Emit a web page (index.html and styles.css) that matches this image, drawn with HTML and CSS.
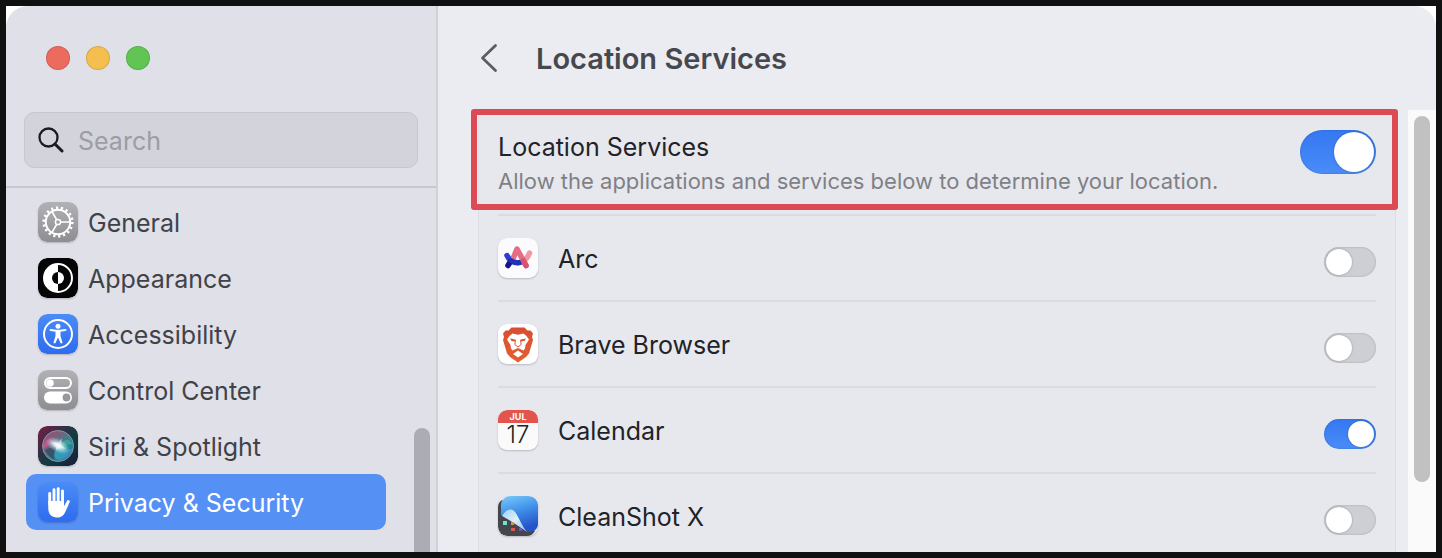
FILE: index.html
```html
<!DOCTYPE html>
<html lang="en">
<head>
    <meta charset="UTF-8">
    <meta name="viewport" content="width=device-width, initial-scale=1.0">
    <title>Location Services</title>
    <link rel="stylesheet" href="styles.css">
</head>
<body>

    <div class="frame">
        <div class="window">

            <aside class="sidebar">
                <div class="window-buttons">
                    <button type="button" class="dot dot-close" aria-label="Close"></button>
                    <button type="button" class="dot dot-minimize" aria-label="Minimize"></button>
                    <button type="button" class="dot dot-zoom" aria-label="Zoom"></button>
                </div>

                <label class="search">
                    <svg class="search-icon" viewBox="0 0 26 26" aria-hidden="true">
                        <circle cx="10.500" cy="10.500" r="9" fill="none" stroke="#1b1b20" stroke-width="2.300"/>
                        <path d="M17 17 L24 24" stroke="#1b1b20" stroke-width="3" stroke-linecap="round"/>
                    </svg>
                    <input type="search" placeholder="Search" aria-label="Search">
                </label>

                <div class="sidebar-body">
                    <nav class="nav">
                        <a href="#general" class="nav-item">
                            <svg class="icon" viewBox="0 0 40 40" aria-hidden="true">
                                <defs>
                                    <linearGradient id="gray" x1="0" y1="0" x2="0" y2="1">
                                        <stop offset="0" stop-color="#b2b2b6"/>
                                        <stop offset="1" stop-color="#8e8e92"/>
                                    </linearGradient>
                                </defs>
                                <rect width="40" height="40" rx="9" fill="url(#gray)"/>
                                <circle cx="20" cy="20" r="14.300" fill="none" stroke="#fff" stroke-width="2.600" stroke-dasharray="2.200 2.792"/>
                                <circle cx="20" cy="20" r="12.200" fill="none" stroke="#fff" stroke-width="2"/>
                                <circle cx="20" cy="20" r="2.600" fill="none" stroke="#fff" stroke-width="1.500"/>
                                <path d="M23 20 H32 M18.500 17.400 L14 9.600 M18.500 22.600 L14 30.400" stroke="#fff" stroke-width="1.700"/>
                            </svg>
                            <span>General</span>
                        </a>
                        <a href="#appearance" class="nav-item">
                            <svg class="icon" viewBox="0 0 40 40" aria-hidden="true">
                                <rect width="40" height="40" rx="9" fill="#050505"/>
                                <circle cx="20" cy="20" r="14" fill="none" stroke="#fff" stroke-width="2"/>
                                <path d="M20 6 A14 14 0 0 0 20 34 Z" fill="#fff"/>
                                <path d="M20 14 A6 6 0 0 0 20 26 Z" fill="#050505"/>
                                <path d="M20 14 A6 6 0 0 1 20 26 Z" fill="#fff"/>
                            </svg>
                            <span>Appearance</span>
                        </a>
                        <a href="#accessibility" class="nav-item">
                            <svg class="icon" viewBox="0 0 40 40" aria-hidden="true">
                                <defs>
                                    <linearGradient id="blue" x1="0" y1="0" x2="0" y2="1">
                                        <stop offset="0" stop-color="#4a8cf7"/>
                                        <stop offset="1" stop-color="#2f6bf0"/>
                                    </linearGradient>
                                </defs>
                                <rect width="40" height="40" rx="9" fill="url(#blue)"/>
                                <circle cx="20" cy="20" r="14" fill="none" stroke="#fff" stroke-width="2"/>
                                <circle cx="20" cy="12.300" r="2.500" fill="#fff"/>
                                <path d="M12.500 16 L18 16.700 H22 L27.500 16" fill="none" stroke="#fff" stroke-width="2" stroke-linecap="round" stroke-linejoin="round"/>
                                <path d="M17.500 16 H22.500 V22 L24.600 29 L22.800 29.500 L20 23.500 L17.200 29.500 L15.400 29 L17.500 22 Z" fill="#fff"/>
                            </svg>
                            <span>Accessibility</span>
                        </a>
                        <a href="#control-center" class="nav-item">
                            <svg class="icon" viewBox="0 0 40 40" aria-hidden="true">
                                <rect width="40" height="40" rx="9" fill="url(#gray)"/>
                                <rect x="7" y="8" width="26" height="10" rx="5" fill="none" stroke="#fff" stroke-width="2"/>
                                <circle cx="12" cy="13" r="3.800" fill="#fff"/>
                                <rect x="6" y="21.500" width="28" height="12" rx="6" fill="#fff"/>
                                <circle cx="28.500" cy="27.500" r="3.900" fill="#98989c"/>
                            </svg>
                            <span>Control Center</span>
                        </a>
                        <a href="#siri" class="nav-item">
                            <svg class="icon" viewBox="0 0 40 40" aria-hidden="true">
                                <defs>
                                    <linearGradient id="siri-back" x1="0" y1="0" x2="1" y2="1">
                                        <stop offset="0" stop-color="#7c1a46"/>
                                        <stop offset="0.400" stop-color="#273344"/>
                                        <stop offset="0.600" stop-color="#123c40"/>
                                        <stop offset="1" stop-color="#191b39"/>
                                    </linearGradient>
                                    <linearGradient id="siri-orb" x1="0" y1="0" x2="1" y2="1">
                                        <stop offset="0" stop-color="#b84078"/>
                                        <stop offset="0.350" stop-color="#71647e"/>
                                        <stop offset="0.650" stop-color="#268c9a"/>
                                        <stop offset="1" stop-color="#315eb0"/>
                                    </linearGradient>
                                    <radialGradient id="siri-glow">
                                        <stop offset="0" stop-color="#fff"/>
                                        <stop offset="0.300" stop-color="#e8faff" stop-opacity="0.850"/>
                                        <stop offset="1" stop-color="#9be8ee" stop-opacity="0"/>
                                    </radialGradient>
                                </defs>
                                <rect width="40" height="40" rx="9" fill="url(#siri-back)"/>
                                <circle cx="20" cy="20" r="15.500" fill="url(#siri-orb)" stroke="#8e98a0" stroke-width="0.900"/>
                                <path d="M5 19 C10 9 15 14 21 20 C14 17 10 20 5 23 Z" fill="#ef579b" opacity="0.500"/>
                                <path d="M21 20 C28 10 31 14 35 18 C30 18 26 19 21 20 Z" fill="#43bfa0" opacity="0.500"/>
                                <path d="M20 20 C16 23 14 31 21 34 C30 33 33 27 35 22 C29 26 24 23 20 20 Z" fill="#46b7e0" opacity="0.400"/>
                                <path d="M7 24 C13 21 17 21 21 20 C16 25 15 29 17 34 C11 31 9 28 7 24 Z" fill="#30455e" opacity="0.700"/>
                                <ellipse cx="20" cy="19.500" rx="13" ry="7" transform="rotate(28 20 19.500)" fill="url(#siri-glow)"/>
                                <path d="M12 16 L20 17 L24 12 L23 19 L28 23 L22 22 L18 24 L18 20 Z" fill="#fff" opacity="0.450"/>
                            </svg>
                            <span>Siri &amp; Spotlight</span>
                        </a>
                        <a href="#privacy" class="nav-item nav-item-active" aria-current="page">
                            <svg class="icon" viewBox="0 0 40 40" aria-hidden="true">
                                <rect width="40" height="40" rx="9" fill="url(#blue)"/>
                                <g fill="none" stroke="#fff" stroke-width="2.900" stroke-linecap="round" stroke-linejoin="round">
                                    <path d="M11.700 22 V11.500"/>
                                    <path d="M16 20 V7.700"/>
                                    <path d="M20.200 20 V6.700"/>
                                    <path d="M24.500 22 V9"/>
                                    <path d="M26 28 L30.300 19.500"/>
                                </g>
                                <path d="M10.250 19 H25.950 V24.500 L28 21 L30.600 22.500 L27.500 29.500 C25.500 34 23 35.500 19 35.500 C13.500 35.500 10.250 32 10.250 26 Z" fill="#fff"/>
                            </svg>
                            <span>Privacy &amp; Security</span>
                        </a>
                    </nav>
                    <div class="sidebar-thumb"></div>
                </div>
            </aside>

            <main class="content">
                <header class="content-header">
                    <button type="button" class="back" aria-label="Back">
                        <svg viewBox="0 0 18 30" aria-hidden="true">
                            <path d="M15.500 2.500 L2.500 15 L15.500 27.500" fill="none" stroke="#5c5d63" stroke-width="2.800" stroke-linecap="round" stroke-linejoin="round"/>
                        </svg>
                    </button>
                    <h1>Location Services</h1>
                </header>

                <div class="content-body">
                    <section class="card">
                        <div class="row row-main">
                            <label for="location" class="row-text">
                                <span class="row-title">Location Services</span>
                                <span class="row-note">Allow the applications and services below to determine your location.</span>
                            </label>
                            <input type="checkbox" id="location" class="toggle toggle-large" checked>
                        </div>
                        <div class="row">
                            <svg class="icon" viewBox="0 0 40 40" aria-hidden="true">
                                <rect width="40" height="40" rx="9" fill="#fbfafc"/>
                                <g fill="none" stroke-linecap="round" stroke-linejoin="round">
                                    <path d="M31.500 15 C30 19 28 21.500 25 23.500" stroke="#f09aa0" stroke-width="5.500"/>
                                    <path d="M9 17.500 C12 24.500 19 26 25 23.500" stroke="#2a3fd6" stroke-width="5.500"/>
                                    <path d="M10 27.500 L12.500 23.500" stroke="#14138c" stroke-width="5.500"/>
                                    <path d="M15.500 19.500 L19 11 L28 27.500" stroke="#e56c85" stroke-width="5.500"/>
                                    <path d="M13 22.500 C16 24.500 19 25 21 24.500" stroke="#2230b8" stroke-width="5"/>
                                    <path d="M25.500 23 L28 27.500" stroke="#d95274" stroke-width="5.500"/>
                                </g>
                            </svg>
                            <label for="arc" class="row-title">Arc</label>
                            <input type="checkbox" id="arc" class="toggle">
                        </div>
                        <div class="row">
                            <svg class="icon" viewBox="0 0 40 40" aria-hidden="true">
                                <defs>
                                    <linearGradient id="brave" x1="0" y1="0" x2="0" y2="1">
                                        <stop offset="0" stop-color="#d94d32"/>
                                        <stop offset="1" stop-color="#e5602f"/>
                                    </linearGradient>
                                </defs>
                                <rect width="40" height="40" rx="9" fill="#fff"/>
                                <path d="M13.500 3.500 H26.500 L29.500 6.500 L32.500 6.500 L35 9.500 L34 13 L35 16 L31 29.500 L28 33 L20 38.500 L12 33 L9 29.500 L5 16 L6 13 L5 9.500 L7.500 6.500 L10.500 6.500 Z" fill="url(#brave)"/>
                                <path d="M14.500 9.500 L20 10.800 L25.500 9.500 L28.500 12 L31 15.500 L27.500 21 L27 24.500 L25.500 26.500 L20 24 L14.500 26.500 L13 24.500 L12.500 21 L9 15.500 L11.500 12 Z" fill="#fff"/>
                                <path d="M12 14.500 L17.500 15.500 L16.500 17.500 L13.500 17 Z M28 14.500 L22.500 15.500 L23.500 17.500 L26.500 17 Z" fill="#dd5433"/>
                                <path d="M17.500 16 L16.800 20.500 L20 23 L23.200 20.500 L22.500 16" fill="none" stroke="#dd5433" stroke-width="1"/>
                                <path d="M15 30 L20 26.500 L25 30 L20 33.500 Z" fill="#fff"/>
                            </svg>
                            <label for="brave-browser" class="row-title">Brave Browser</label>
                            <input type="checkbox" id="brave-browser" class="toggle">
                        </div>
                        <div class="row">
                            <svg class="icon" viewBox="0 0 40 40" aria-hidden="true">
                                <rect width="40" height="40" rx="9" fill="#fafafa"/>
                                <path d="M0 13 V9 A9 9 0 0 1 9 0 H31 A9 9 0 0 1 40 9 V13 Z" fill="#e2544c"/>
                                <text x="20" y="10" class="calendar-month">JUL</text>
                                <text x="20" y="33" class="calendar-day">17</text>
                            </svg>
                            <label for="calendar" class="row-title">Calendar</label>
                            <input type="checkbox" id="calendar" class="toggle" checked>
                        </div>
                        <div class="row">
                            <svg class="icon" viewBox="0 0 40 40" aria-hidden="true">
                                <defs>
                                    <linearGradient id="clean" x1="0" y1="0" x2="0.300" y2="1">
                                        <stop offset="0" stop-color="#7accf9"/>
                                        <stop offset="0.500" stop-color="#4090ea"/>
                                        <stop offset="1" stop-color="#2553c8"/>
                                    </linearGradient>
                                    <linearGradient id="curl" x1="0" y1="0" x2="1" y2="1">
                                        <stop offset="0" stop-color="#9fd2f4"/>
                                        <stop offset="0.500" stop-color="#dceffa"/>
                                        <stop offset="1" stop-color="#8dbcf0"/>
                                    </linearGradient>
                                </defs>
                                <path d="M4 4 C1 6 0 8 0 11 V31 A9 9 0 0 0 9 40 H29 C33 40 35 38 37 35 Z" fill="#44464e"/>
                                <path d="M3 19 V9 A9 9 0 0 1 12 0 H31 A9 9 0 0 1 40 9 V28 C40 33 36 36 30 36 L16 24 Z" fill="url(#clean)"/>
                                <path d="M4 20 C7 15.500 10 13.500 13 13.500 C19 14 21 26 29 36 C20 30 12 24 4 20 Z" fill="url(#curl)"/>
                                <rect x="5" y="25" width="4" height="4" fill="#76dfc8"/>
                                <rect x="13" y="26" width="3" height="3" fill="#dc923c"/>
                                <rect x="13" y="32" width="4" height="3" fill="#dc5951"/>
                                <rect x="21" y="32" width="3" height="3" fill="#7650c0"/>
                            </svg>
                            <label for="cleanshot" class="row-title">CleanShot X</label>
                            <input type="checkbox" id="cleanshot" class="toggle">
                        </div>
                    </section>
                    <div class="scroll-track">
                        <div class="scroll-thumb"></div>
                    </div>
                </div>
            </main>

        </div>
    </div>

</body>
</html>
```
FILE: styles.css
```css
* {
    box-sizing: border-box;
}

body {
    font-family: Inter, "Liberation Sans", sans-serif;
    font-size: 25px;
    color: #222328;
    background-color: #101011;
    margin: 0;
    padding: 6px;
    height: 100vh;
}

/* White backing that shows at the rounded corners */
.frame {
    height: 100%;
    background-color: #ffffff;
}

.window {
    display: flex;
    height: 100%;
    border-radius: 22px 22px 0 0;
    overflow: hidden;
}

/* Sidebar */
.sidebar {
    display: flex;
    flex-direction: column;
    flex: none;
    width: 432px;
    background-color: #dfe0e8;
    border-right: 2px solid #d0d1d8;
}

.window-buttons {
    display: flex;
    gap: 16px;
    padding: 40px 40px 42px;
}

.dot {
    width: 24px;
    height: 24px;
    padding: 0;
    border: 1px solid rgba(0, 0, 0, 0.12);
    border-radius: 50%;
}

.dot-close {
    background-color: #ed6a5e;
}

.dot-minimize {
    background-color: #f5bf4f;
}

.dot-zoom {
    background-color: #61c554;
}

.search {
    display: flex;
    align-items: center;
    gap: 14px;
    height: 56px;
    margin: 0 18px;
    padding: 0 13px;
    background-color: #d2d3db;
    border: 1px solid #c6c7cf;
    border-radius: 10px;
}

.search-icon {
    flex: none;
    width: 26px;
    height: 26px;
}

.search input {
    flex: 1;
    min-width: 0;
    padding: 2px 0 0;
    border: none;
    outline: none;
    background: none;
    font: inherit;
}

.search input::placeholder {
    color: #9c9da5;
}

.sidebar-body {
    display: flex;
    flex: 1;
    min-height: 0;
    margin-top: 18px;
    border-top: 2px solid #c6c7cf;
}

.nav {
    flex: 1;
    padding: 6px 28px 0 20px;
}

.nav-item {
    display: flex;
    align-items: center;
    gap: 10px;
    height: 56px;
    padding: 0 12px;
    border-radius: 10px;
    color: #414248;
    text-decoration: none;
}

.nav-item span,
.row > .row-title {
    padding-top: 2px;
}

.nav-item-active {
    background-color: #5590f5;
    color: #ffffff;
}

.icon {
    flex: none;
    width: 40px;
    height: 40px;
    border-radius: 9px;
    box-shadow: 0 1px 2px rgba(0, 0, 0, 0.2);
}

.sidebar-thumb {
    align-self: flex-end;
    width: 16px;
    height: 34%;
    margin-right: 6px;
    border-radius: 8px 8px 0 0;
    background-color: #acadb4;
}

/* Right side */
.content {
    display: flex;
    flex-direction: column;
    flex: 1;
    min-width: 0;
    background-color: #ebecf1;
}

.content-header {
    display: flex;
    align-items: center;
    gap: 38px;
    flex: none;
    height: 104px;
    padding-left: 42px;
}

.back {
    width: 18px;
    height: 30px;
    padding: 0;
    border: none;
    background: none;
}

.back svg {
    display: block;
}

h1 {
    margin: 0;
    font-size: 29px;
    font-weight: 600;
    color: #47484e;
}

.content-body {
    display: flex;
    flex: 1;
    min-height: 0;
    padding-left: 40px;
}

.card {
    flex: 1;
    min-width: 0;
    margin-right: 12px;
    padding: 0 19px;
    background-color: #e7e8ed;
    border: 1px solid #dddee4;
    border-width: 0 1px;
}

.row {
    display: flex;
    align-items: center;
    gap: 20px;
    height: 86px;
    border-bottom: 2px solid #dbdce1;
}

.row:last-child {
    border-bottom-color: transparent;
}

.row .toggle {
    margin-left: auto;
}

.row-main {
    position: relative;
    align-items: flex-start;
    height: 106px;
    padding-top: 20px;
}

/* Red outline around the main switch */
.row-main::after {
    content: "";
    position: absolute;
    inset: -1px -22px 4px -27px;
    border: 6px solid #dc4a53;
    border-radius: 3px;
    pointer-events: none;
}

.row-text {
    display: flex;
    flex-direction: column;
    line-height: 34px;
}

.row-note {
    font-size: 22px;
    color: #7f8086;
}

/* Switches */
.toggle {
    appearance: none;
    flex: none;
    width: 52px;
    height: 30px;
    margin: 8px 0 0;
    padding: 2px;
    border-radius: 22px;
    background-color: #cecfd4;
    box-shadow: inset 0 0 2px rgba(0, 0, 0, 0.25);
}

.toggle::before {
    content: "";
    display: block;
    width: 26px;
    height: 26px;
    border-radius: 50%;
    background-color: #ffffff;
    box-shadow: 0 0 2px rgba(0, 0, 0, 0.35);
}

.toggle:checked {
    background-image: linear-gradient(#3478f2, #4a8cf7);
}

.toggle:checked::before {
    margin-left: auto;
}

.toggle-large {
    width: 76px;
    height: 44px;
    margin-top: 0;
}

.toggle-large::before {
    width: 40px;
    height: 40px;
}

/* Scroll bar */
.scroll-track {
    flex: none;
    width: 28px;
    padding: 6px;
    background-color: #fafafa;
}

.scroll-thumb {
    width: 16px;
    height: 85%;
    border-radius: 8px;
    background-color: #c1c1c1;
}

.calendar-month {
    font-size: 9px;
    font-weight: 700;
    text-anchor: middle;
    fill: #ffffff;
}

.calendar-day {
    font-size: 24px;
    font-weight: 300;
    text-anchor: middle;
    fill: #222222;
}
```
